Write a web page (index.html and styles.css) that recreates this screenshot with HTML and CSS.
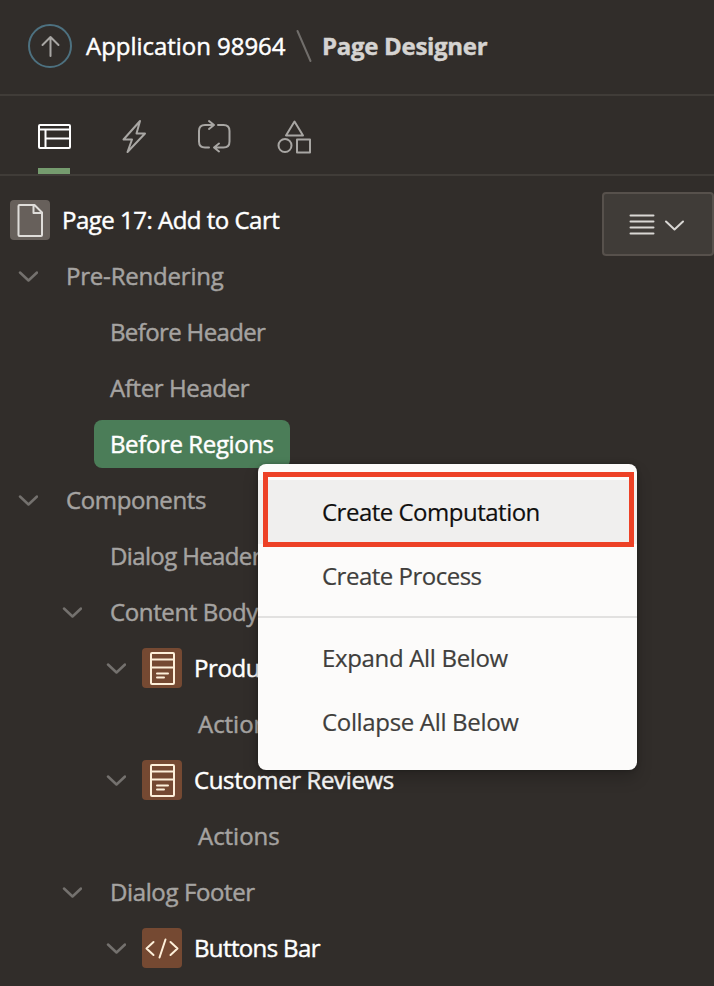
FILE: index.html
```html
<!DOCTYPE html>
<html lang="en">
<head>
<meta charset="utf-8">
<title>Page Designer</title>
<link rel="stylesheet" href="styles.css">
</head>
<body>
<svg class="defs" aria-hidden="true">
  <symbol id="chevron" viewBox="0 0 20 12"><path d="M2 2.500 10.500 10.500l8.500-8"/></symbol>
  <symbol id="form" viewBox="0 0 40 40"><rect x="9" y="5" width="23" height="31" rx="1"/><path d="M9 11.500h23M9 19.500h23M15 25.500h11M15 29.500h7"/></symbol>
</svg>
<header class="header">
  <svg class="up" viewBox="0 0 44 44"><circle cx="22" cy="22" r="21"/><path d="M22.500 32V13M14.500 21l8-8 8 8"/></svg>
  <span class="app loose">Application 98964</span>
  <svg class="slash" viewBox="0 0 16 34"><path d="M1.500 2 14.500 32"/></svg>
  <strong class="current">Page Designer</strong>
</header>
<nav class="tabs">
  <a class="tab active"><svg viewBox="0 0 36 36"><rect x="3" y="7" width="31" height="23" rx="1"/><path d="M3 11.500h31M9.500 11.500V30M9.500 20.500H34"/></svg></a>
  <a class="tab"><svg viewBox="0 0 36 36"><path d="M24 3 7.500 21.500H16L11.500 34 29 15.500H20.500z"/></svg></a>
  <a class="tab"><svg viewBox="0 0 36 36"><path d="M13 29.500H9q-6 0-6-6V13q0-6 6-6h8.500M13 3l5 4-5 4M22 7h5.500q6 0 6 6v10.500q0 6-6 6H19M23 25.500l-5 4 5 4"/></svg></a>
  <a class="tab"><svg viewBox="0 0 36 36"><path d="M18.500 3.500 10 17.500h17z"/><circle cx="9" cy="27.500" r="6.500"/><rect x="21" y="21.500" width="13" height="13"/></svg></a>
</nav>
<main class="panel">
  <ul class="tree">
    <li class="row root tight"><svg class="page" viewBox="0 0 40 40"><path d="M10 5h14.500L32 12.500V35q0 1-1 1H9.500q-1 0-1-1V6q0-1 1-1zM23.500 5v8H32"/></svg>Page 17: Add to Cart</li>
    <li class="row l1 snug"><svg class="chev"><use href="#chevron"/></svg>Pre-Rendering</li>
    <li class="row l2 tighter">Before Header</li>
    <li class="row l2">After Header</li>
    <li class="row l2"><span class="selected">Before Regions</span></li>
    <li class="row l1"><svg class="chev"><use href="#chevron"/></svg>Components</li>
    <li class="row l2 tighter">Dialog Header</li>
    <li class="row l2"><svg class="chev"><use href="#chevron"/></svg>Content Body</li>
    <li class="row l3"><svg class="chev"><use href="#chevron"/></svg><svg class="badge"><use href="#form"/></svg>Product</li>
    <li class="row l4 loose">Actions</li>
    <li class="row l3"><svg class="chev"><use href="#chevron"/></svg><svg class="badge"><use href="#form"/></svg>Customer Reviews</li>
    <li class="row l4 loose">Actions</li>
    <li class="row l2"><svg class="chev"><use href="#chevron"/></svg>Dialog Footer</li>
    <li class="row l3 tighter"><svg class="chev"><use href="#chevron"/></svg><svg class="badge" viewBox="0 0 40 40"><path d="m11.500 14-7 6.500 7 6.500M28.500 14l7 6.500-7 6.500M23.500 11.500l-6 18"/></svg>Buttons Bar</li>
  </ul>
  <button class="options" aria-label="Options"><svg class="lines" viewBox="0 0 26 24"><path d="M1.500 3.500h23M1.500 9.500h23M1.500 15.500h23M1.500 21.500h23"/></svg><svg class="down"><use href="#chevron"/></svg></button>
</main>
<div class="menu">
  <div class="item hover tight">Create Computation</div>
  <div class="item tight">Create Process</div>
  <hr>
  <div class="item">Expand All Below</div>
  <div class="item">Collapse All Below</div>
  <div class="marker"></div>
</div>
</body>
</html>
```
FILE: styles.css
```css
* { box-sizing: border-box; }
body {
  margin: 0;
  height: 986px;
  overflow: hidden;
  position: relative;
  background: #312d2a;
  color: #fff;
  font: 24px/32px "Open Sans", "Noto Sans", sans-serif;
  letter-spacing: -.38px;
  -webkit-text-stroke: .45px currentColor;
}
svg { display: block; flex: none; fill: none; stroke: currentColor; stroke-width: 2; stroke-linecap: round; stroke-linejoin: round; }
.defs { position: absolute; width: 0; height: 0; }
.loose { letter-spacing: -.04px; }
.snug { letter-spacing: -.2px; }
.tight { letter-spacing: -.5px; }
.tighter { letter-spacing: -.63px; }
.header { display: flex; align-items: center; height: 96px; padding: 0 0 2px 28px; border-bottom: 2px solid #403c38; }
.up { width: 44px; height: 44px; color: #a8a6a3; }
.up circle { stroke: #4d7180; }
.app { width: 199px; margin-left: 14px; white-space: nowrap; }
.slash { width: 16px; height: 34px; margin: 0 10px 0 11px; color: #716e6b; }
.current { color: #d5d3d1; letter-spacing: -.3px; }
.tabs { display: flex; gap: 48px; height: 80px; padding-left: 38px; border-bottom: 2px solid #403c38; }
.tab { display: flex; justify-content: center; width: 32px; padding-top: 22px; color: #a8a6a3; }
.tab svg { width: 36px; height: 36px; }
.active { color: #fff; border-bottom: 6px solid #759b6e; }
.panel { display: flex; align-items: flex-start; padding-top: 16px; }
.tree { flex: 1; margin: 0; padding: 0; list-style: none; }
.row { display: flex; align-items: center; height: 56px; color: #a5a3a1; white-space: nowrap; }
.root { padding-left: 10px; color: #fff; }
.page { width: 40px; height: 40px; margin-right: 12px; border-radius: 4px; background: #67605b; color: #dfddda; }
.chev { width: 20px; height: 12px; color: #74716e; stroke-width: 2.500; }
.l1 { padding-left: 66px; }
.l2 { padding-left: 110px; }
.l3 { padding-left: 106px; color: #fff; }
.l4 { padding-left: 198px; }
.l1 .chev, .l2 .chev { margin: 0 28px 0 -48px; }
.badge { width: 40px; height: 40px; margin: 0 12px 0 16px; border-radius: 4px; background: #754932; color: #fdefd9; }
.selected { width: 196px; height: 48px; margin-left: -16px; padding: 8px 16px; border-radius: 8px; background: #4b7d58; color: #fff; }
.options { display: flex; align-items: center; width: 112px; height: 64px; padding: 0 0 0 25px; gap: 9px; border: 2px solid #57514c; border-radius: 4px; background: #403c38; color: #d9d7d4; }
.lines { width: 26px; height: 24px; }
.down { width: 20px; height: 12px; margin-top: 2px; }
.menu { position: absolute; left: 258px; top: 464px; width: 379px; height: 306px; padding: 16px 0; border-radius: 8px; background: #fcfbfa; color: #403e3c; box-shadow: 0 8px 16px #0003, 0 0 4px #0004; letter-spacing: -.33px; -webkit-text-stroke-width: .2px; }
.item { height: 64px; padding: 16px 64px; white-space: nowrap; }
.hover { background: #f0efee; color: #100f0e; }
.menu hr { height: 2px; margin: 8px 0; border: 0; background: #e2e1e0; }
.marker { position: absolute; left: 5px; top: 8px; width: 371px; height: 75px; border: 5px solid #ed4126; }
```
